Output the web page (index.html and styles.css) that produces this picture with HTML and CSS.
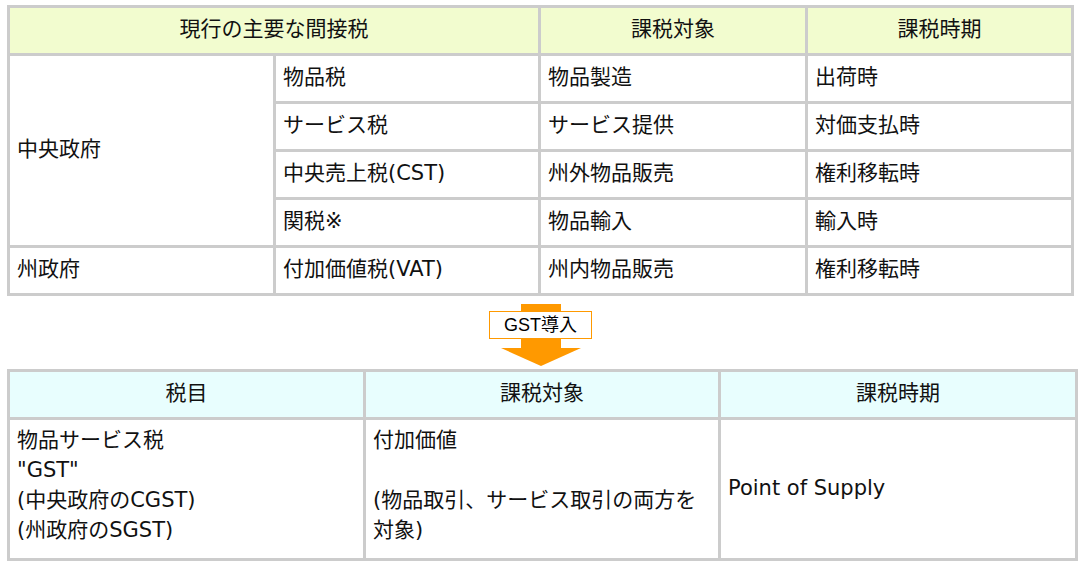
FILE: index.html
```html
<!DOCTYPE html>
<html lang="ja">
<head>
<meta charset="utf-8">
<link rel="stylesheet" href="styles.css">
</head>
<body>
<div class="page">
  <div class="grid grid-old">
    <div class="cell head span2">現行の主要な間接税</div>
    <div class="cell head">課税対象</div>
    <div class="cell head">課税時期</div>

    <div class="cell rows4">中央政府</div>
    <div class="cell">物品税</div>
    <div class="cell">物品製造</div>
    <div class="cell">出荷時</div>

    <div class="cell">サービス税</div>
    <div class="cell">サービス提供</div>
    <div class="cell">対価支払時</div>

    <div class="cell">中央売上税(CST)</div>
    <div class="cell">州外物品販売</div>
    <div class="cell">権利移転時</div>

    <div class="cell">関税※</div>
    <div class="cell">物品輸入</div>
    <div class="cell">輸入時</div>

    <div class="cell">州政府</div>
    <div class="cell">付加価値税(VAT)</div>
    <div class="cell">州内物品販売</div>
    <div class="cell">権利移転時</div>
  </div>

  <div class="arrow">
    <div class="stem stem-top"></div>
    <div class="arrow-label">GST導入</div>
    <div class="stem stem-bottom"></div>
    <div class="arrow-head"></div>
  </div>

  <div class="grid grid-new">
    <div class="cell head head-new">税目</div>
    <div class="cell head head-new">課税対象</div>
    <div class="cell head head-new">課税時期</div>

    <div class="cell body-top">物品サービス税<br>"GST"<br>(中央政府のCGST)<br>(州政府のSGST)</div>
    <div class="cell body-top">付加価値<br><br>(物品取引、サービス取引の両方を<br>対象)</div>
    <div class="cell">Point of Supply</div>
  </div>
</div>
</body>
</html>
```

FILE: styles.css
```css
* {
  box-sizing: border-box;
}

html, body {
  margin: 0;
  padding: 0;
  background: #ffffff;
}

body {
  font-family: "DejaVu Sans", "Noto Sans CJK JP", sans-serif;
  font-size: 21px;
  color: #111111;
}

.page {
  padding: 5px 0 0 7px;
  display: flex;
  flex-direction: column;
  align-items: flex-start;
}

.grid {
  display: grid;
  border-top: 3px solid #cccccc;
  border-left: 3px solid #cccccc;
}

.grid-old {
  grid-template-columns: 266px 265px 267px 266px;
  grid-auto-rows: 48px;
}

.grid-new {
  grid-template-columns: 356px 355px 357px;
  grid-template-rows: 48px 141px;
}

.cell {
  border-right: 3px solid #cccccc;
  border-bottom: 3px solid #cccccc;
  padding: 0 6px 3px 7px;
  line-height: 30px;
  display: flex;
  align-items: center;
  white-space: nowrap;
}

.head {
  background: #f2fccf;
  justify-content: center;
  padding: 0 0 3px 0;
}

.head-new {
  background: #e8fefe;
}

.span2 {
  grid-column: span 2;
}

.rows4 {
  grid-row: span 4;
}

.body-top {
  display: block;
  padding-top: 5px;
}

.arrow {
  align-self: stretch;
  width: 1067px;
  display: flex;
  flex-direction: column;
  align-items: center;
  padding-top: 8px;
  padding-bottom: 3px;
}

.stem {
  width: 40px;
  background: #ff9900;
}

.stem-top {
  height: 7px;
}

.stem-bottom {
  height: 9px;
}

.arrow-label {
  width: 103px;
  height: 28px;
  border: 1px solid #ff9900;
  background: #ffffff;
  font-family: "Liberation Sans", "Noto Sans CJK JP", sans-serif;
  font-size: 18px;
  line-height: 26px;
  text-align: center;
  color: #000000;
}

.arrow-head {
  width: 0;
  height: 0;
  border-left: 40px solid transparent;
  border-right: 40px solid transparent;
  border-top: 18px solid #ff9900;
}
```
